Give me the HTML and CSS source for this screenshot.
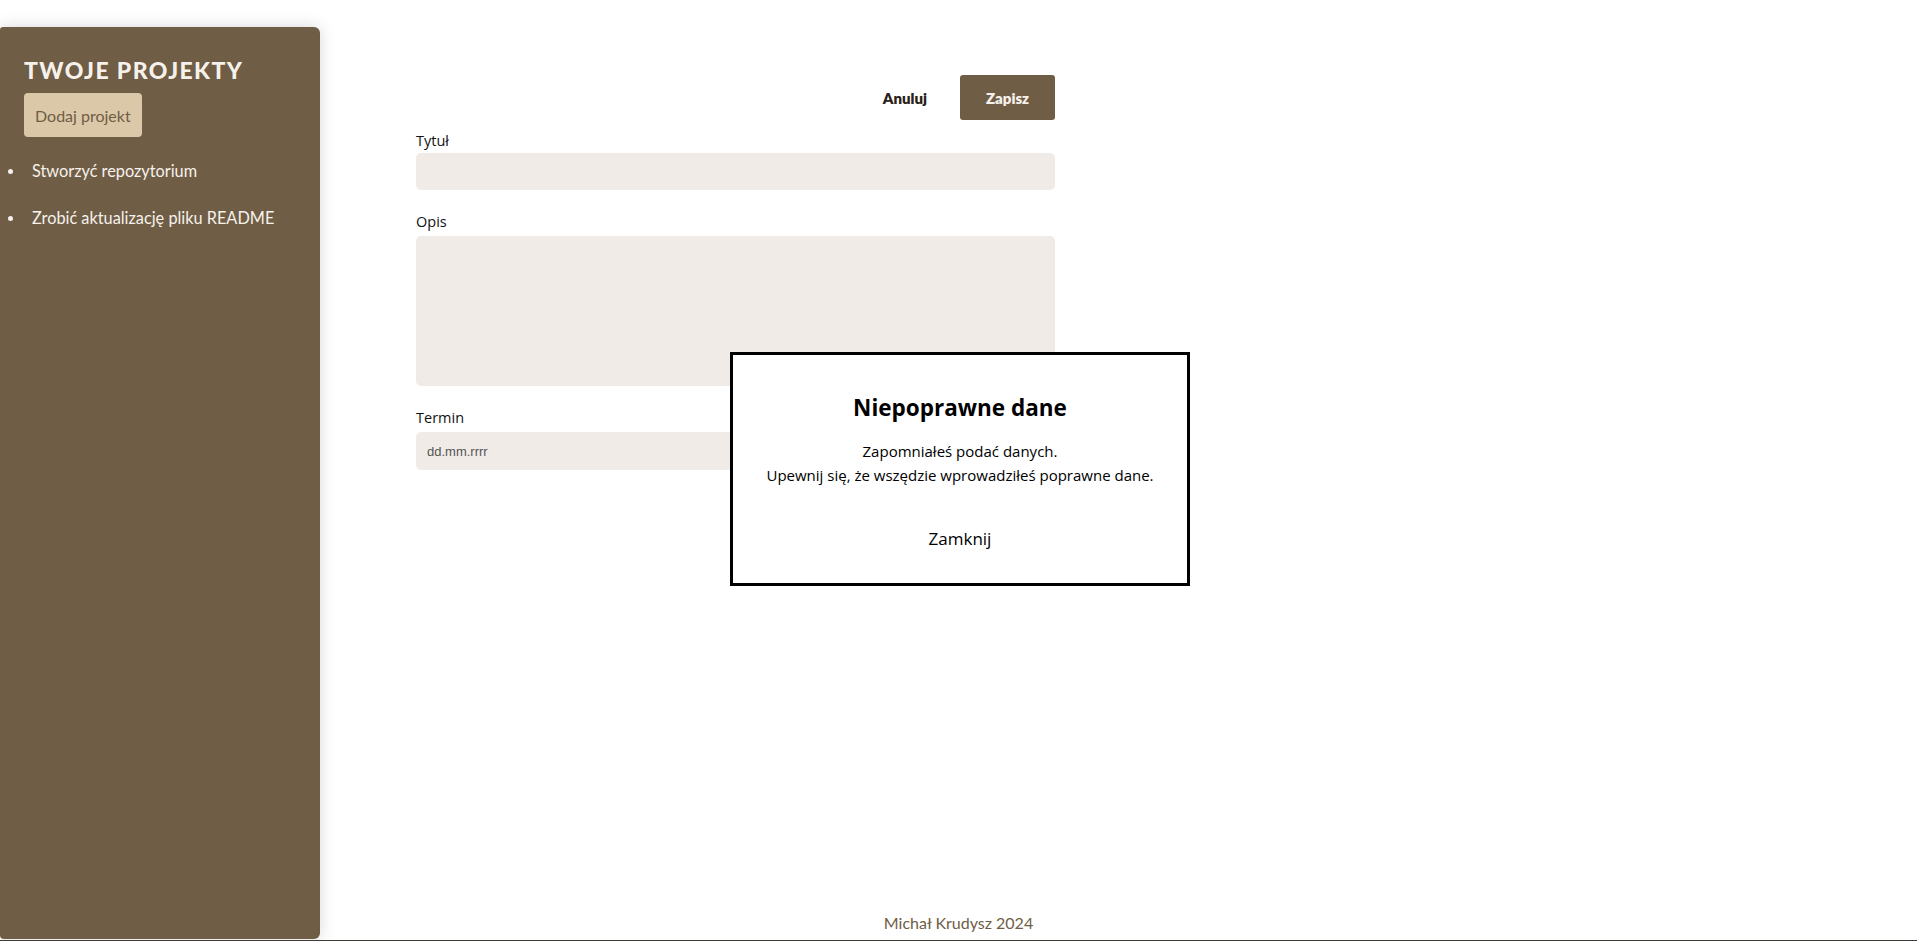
FILE: index.html
```html
<!DOCTYPE html>
<html lang="pl">
<head>
<meta charset="utf-8">
<title>Projekty</title>
<link rel="stylesheet" href="styles.css">
</head>
<body>
<div class="page">
  <aside class="sidebar">
    <h2 class="sidebar-title">Twoje projekty</h2>
    <button class="btn-add">Dodaj projekt</button>
    <ul class="project-list">
      <li class="project-item">Stworzyć repozytorium</li>
      <li class="project-item">Zrobić aktualizację pliku README</li>
    </ul>
  </aside>
  <main class="content">
    <div class="form">
      <menu class="actions">
        <li><button class="btn-cancel">Anuluj</button></li>
        <li><button class="btn-save">Zapisz</button></li>
      </menu>
      <div class="field">
        <label class="field-label">Tytuł</label>
        <input class="field-input" type="text">
      </div>
      <div class="field">
        <label class="field-label">Opis</label>
        <textarea class="field-input field-textarea"></textarea>
      </div>
      <div class="field">
        <label class="field-label">Termin</label>
        <input class="field-input field-date" type="text" placeholder="dd.mm.rrrr">
      </div>
    </div>
  </main>
  <footer class="footer">Michał Krudysz 2024</footer>
</div>
<div class="modal">
  <h2 class="modal-title">Niepoprawne dane</h2>
  <p class="modal-text">Zapomniałeś podać danych.</p>
  <p class="modal-text">Upewnij się, że wszędzie wprowadziłeś poprawne dane.</p>
  <div class="modal-actions"><button class="btn-close">Zamknij</button></div>
</div>
</body>
</html>
```
FILE: styles.css
```css
* { box-sizing: border-box; }
html, body { margin: 0; padding: 0; background: #ffffff; }
body { font-family: "Lato", "Open Sans", sans-serif; color: #1c1917; }

.page {
  height: 941px;
  border-bottom: 1px solid #3f3a34;
  padding-top: 27px;
  padding-bottom: 1px;
  display: grid;
  grid-template-columns: 320px 1fr;
  grid-template-rows: 1fr auto;
  overflow: hidden;
}

.sidebar {
  grid-column: 1;
  grid-row: 1 / 3;
  background: #6f5d46;
  color: #f6f1ea;
  border-radius: 3px 6px 6px 4px;
  box-shadow: 0 0 16px rgba(0, 0, 0, 0.16);
  padding: 29px 24px 0 0;
  position: relative;
  z-index: 1;
}

.sidebar-title {
  margin: 0 0 9px 24px;
  font-size: 23px;
  line-height: 28px;
  font-weight: 900;
  letter-spacing: 1.4px;
  text-transform: uppercase;
  color: #f6f1ea;
}

.btn-add {
  margin-left: 24px;
  height: 44px;
  padding: 0 11px;
  border: none;
  border-radius: 4px;
  background: #dbc8a8;
  color: #6f5d46;
  font-family: "Lato", sans-serif;
  font-size: 16px;
  cursor: pointer;
}

.project-list {
  list-style: none;
  margin: 22px 0 0 0;
  padding: 0;
}

.project-item {
  display: flex;
  align-items: center;
  padding-left: 8px;
  margin-bottom: 23px;
  font-size: 16.3px;
  line-height: 24px;
  color: #f6f1ea;
}

.project-item::before {
  content: "";
  width: 5px;
  height: 5px;
  border-radius: 50%;
  background: #f6f1ea;
  margin-right: 19px;
  flex: none;
}

.content {
  grid-column: 2;
  grid-row: 1;
  padding-left: 96px;
}

.form {
  width: 639px;
  margin-top: 48px;
}

.actions {
  display: flex;
  justify-content: flex-end;
  align-items: center;
  gap: 33px;
  list-style: none;
  margin: 0 0 10px 0;
  padding: 0;
}

.btn-cancel {
  background: none;
  border: none;
  padding: 0;
  font-family: "Lato", sans-serif;
  font-weight: 800;
  font-size: 15px;
  color: #2a2118;
  cursor: pointer;
}

.btn-save {
  height: 45px;
  width: 95px;
  border: none;
  border-radius: 3px;
  background: #6f5d46;
  color: #f6f1ea;
  font-family: "Lato", sans-serif;
  font-weight: 800;
  font-size: 15px;
  cursor: pointer;
}

.field {
  display: flex;
  flex-direction: column;
  margin-bottom: 21px;
}

.field-label {
  font-family: "Open Sans", "Noto Sans", sans-serif;
  font-size: 14.5px;
  line-height: 22px;
  color: #111;
  margin-bottom: 1px;
}

.field-input {
  width: 100%;
  height: 37px;
  border: none;
  border-radius: 5px;
  background: #f0ebe7;
  outline: none;
  font-family: "Liberation Sans", sans-serif;
  font-size: 13px;
  padding: 0 11px;
}

.field-textarea {
  height: 150px;
  resize: none;
  margin-top: 2px;
}

.field-date {
  height: 38px;
  margin-top: 2px;
}

.field-date::placeholder { color: #555; }

.footer {
  grid-column: 1 / 3;
  grid-row: 2;
  text-align: center;
  font-size: 16px;
  line-height: 20px;
  color: #6f5d46;
  padding-bottom: 6px;
  position: relative;
  z-index: 2;
}

.modal {
  position: fixed;
  left: 730px;
  top: 352px;
  width: 460px;
  height: 234px;
  border: 3px solid #000;
  background: #fff;
  padding: 37px 0 0;
  text-align: center;
  font-family: "Open Sans", "Noto Sans", sans-serif;
  color: #000;
  z-index: 10;
}

.modal-title {
  margin: 0 0 15px;
  font-size: 22.5px;
  line-height: 32px;
  font-weight: 700;
}

.modal-text {
  margin: 0;
  font-size: 15px;
  line-height: 24px;
}

.modal-actions { margin-top: 39px; }

.btn-close {
  background: none;
  border: none;
  padding: 0;
  font-family: "Open Sans", "Noto Sans", sans-serif;
  font-size: 17px;
  line-height: 26px;
  color: #000;
  cursor: pointer;
}
```
